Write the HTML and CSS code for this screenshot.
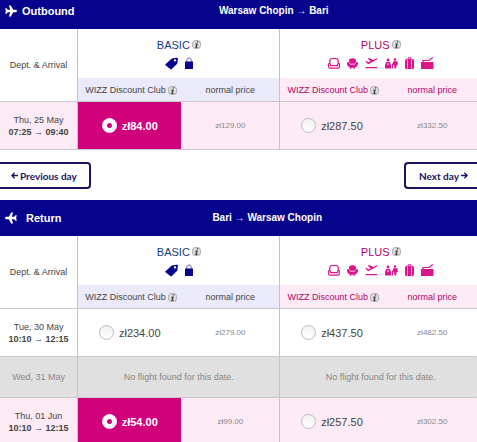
FILE: index.html
```
<!DOCTYPE html>
<html lang="en">
<head>
<meta charset="utf-8">
<title>Select flights</title>
<link rel="stylesheet" href="styles.css">
</head>

<body>

<svg class="defs" aria-hidden="true">
  <symbol id="plane" viewBox="0 0 12 12">
    <path d="M12 6c0 .7-.6 1.200-1.500 1.200H8.200L5.800 11.500H3.900L5.200 7.200H2.800L1.600 8.800H.2L.9 6 .2 3.200h1.400L2.800 4.800h2.400L3.900.5h1.900L8.200 4.800h2.300c.9 0 1.500.5 1.500 1.200z"/>
  </symbol>
  <symbol id="info" viewBox="0 0 9 9">
    <rect x=".5" y=".5" width="8" height="8" rx="3" fill="#ddd" stroke="#aaa"/>
    <path d="M5 1.200h1.400L6 2.600H4.700zM3.300 3.500h2.500L5 7h.7l-.2.900H3.200L4 4.400h-.9z" fill="#444"/>
  </symbol>
  <symbol id="tag" viewBox="0 0 13 13">
    <path fill-rule="evenodd" d="M6.500 1.800Q7 1.200 8 1.200L12 .8c.7 0 1 .4.900 1L12.500 5.500q0 .8-.6 1.400L6.800 12c-.5.500-1 .5-1.500 0L.8 8.500c-.7-.5-.7-1 0-1.600zM10 2.200a1.200 1.200 0 1 0 .1 2.400 1.200 1.200 0 0 0-.1-2.400z"/>
  </symbol>
  <symbol id="bag" viewBox="0 0 8 13">
    <path d="M1.800 5V2.500C1.800.6 6.200.6 6.200 2.500V5" fill="none" stroke="currentColor" stroke-width="1" opacity=".6"/>
    <path d="M0 4.500h8V12H0z"/>
  </symbol>
  <symbol id="seat" viewBox="0 0 12 13">
    <path d="M1.800 6V4Q1.800 1.500 4 1.500h4q2.200 0 2.200 2.500v2M1.800 6C.4 6 .4 8 .7 8.500v1.500q0 1.200 1.200 1.200h8.200q1.200 0 1.200-1.200V8.500c.3-.5.3-2.500-1.100-2.500L9.300 8.600H2.700z" fill="none" stroke="currentColor" stroke-width="1.200"/>
  </symbol>
  <symbol id="armchair" viewBox="0 0 11 13">
    <path d="M2 4.800V3.500Q2 1.200 5.500 1.200T9 3.500v1.300L7.800 6.800H3.200zM0 6.200C0 4.600 2 4.600 2.300 6l.9 1.600h4.600L8.700 6C9 4.600 11 4.600 11 6.200 11 7.700 10 10 8.500 10H8l.4 1.800H6.900L6.500 10.700h-2l-.4 1.100H2.600L3 10h-.5C1 10 0 7.700 0 6.200z"/>
  </symbol>
  <symbol id="takeoff" viewBox="0 0 13 13">
    <path d="M.3 4.600 1.500 4l2 1.200 2-1L2.800 1.600l1.400-.5 4.300 1.800L11.300 1.500c1.200-.4 1.700.4.8 1L3.200 7.300zM.5 10h11.800v1.200H.5z"/>
  </symbol>
  <symbol id="lounge" viewBox="0 0 13 13">
    <path d="M3 1.500a1.400 1.400 0 1 1 0 2.900 1.400 1.400 0 0 1 0-2.900zM1.200 5h3.600l1.200 3v3.500H0V8zM7 6.500h1V11.500H6.500zM10 1.200a1.300 1.300 0 1 1 0 2.600 1.300 1.300 0 0 1 0-2.600zM8.200 4.200h4.300l.4 3.300-1.400 1-.5 3h-1.400l-.6-3-1.200-1z"/>
    <path d="M2.500 6.200h1v1.800h-1z" fill="#fff"/>
  </symbol>
  <symbol id="suitcase" viewBox="0 0 9 13">
    <path d="M3 2V.8h3V2" fill="none" stroke="currentColor"/>
    <rect y="2" width="9" height="10" rx="1.500"/>
    <path d="M2.500 2.500v9M6.500 2.500v9" stroke="#fff" stroke-width=".7"/>
  </symbol>
  <symbol id="trolley" viewBox="0 0 13 13">
    <path d="M0 5h12.500v6.500q0 .5-.5.500H.7q-.7 0-.7-.5z"/>
    <path d="M2 5V3.500h6L11.800.6" fill="none" stroke="currentColor" stroke-width="1.200"/>
  </symbol>
</svg>

<section>
  <div class="bar bar-first">
    <svg class="plane"><use href="#plane"/></svg>
    <h2>Outbound</h2>
    <p class="route">Warsaw Chopin &rarr; Bari</p>
  </div>

  <table class="flights">
    <colgroup>
      <col class="c-date"><col class="c-club"><col class="c-normal"><col class="c-club"><col>
    </colgroup>
    <thead>
      <tr class="fares">
        <th class="date" rowspan="2">Dept. &amp; Arrival</th>
        <th class="basic end" colspan="2">
          <div class="fare">BASIC <button class="info" aria-label="About Basic"><svg><use href="#info"/></svg></button></div>
          <div class="perks">
            <svg class="w13"><use href="#tag"/></svg>
            <svg class="w8"><use href="#bag"/></svg>
          </div>
        </th>
        <th class="plus" colspan="2">
          <div class="fare">PLUS <button class="info" aria-label="About Plus"><svg><use href="#info"/></svg></button></div>
          <div class="perks">
            <svg class="w12"><use href="#seat"/></svg>
            <svg class="w11"><use href="#armchair"/></svg>
            <svg class="w13"><use href="#takeoff"/></svg>
            <svg class="w13"><use href="#lounge"/></svg>
            <svg class="w9"><use href="#suitcase"/></svg>
            <svg class="w13"><use href="#trolley"/></svg>
          </div>
        </th>
      </tr>
      <tr class="kinds">
        <th class="club">WIZZ Discount Club <button class="info" aria-label="About the club"><svg><use href="#info"/></svg></button></th>
        <th class="end">normal price</th>
        <th class="club pink">WIZZ Discount Club <button class="info" aria-label="About the club"><svg><use href="#info"/></svg></button></th>
        <th class="pink plus">normal price</th>
      </tr>
    </thead>
    <tbody>
      <tr class="picked">
        <td class="date">Thu, 25 May<br><b>07:25 &rarr; 09:40</b></td>
        <td class="selected"><label><input type="radio" name="out" checked>zł84.00</label></td>
        <td class="normal end">zł129.00</td>
        <td><label><input type="radio" name="out">zł287.50</label></td>
        <td class="normal plus">zł332.50</td>
      </tr>
    </tbody>
  </table>

  <div class="days">
    <button class="day prev"><svg viewBox="0 0 7 7"><path d="M7 3.500H1M3.600.8.900 3.500l2.700 2.700"/></svg>Previous day</button>
    <button class="day next">Next day<svg viewBox="0 0 7 7"><path d="M0 3.500h6M3.400.8l2.700 2.700-2.700 2.700"/></svg></button>
  </div>
</section>

<section>
  <div class="bar bar-return">
    <svg class="plane"><use href="#plane"/></svg>
    <h2>Return</h2>
    <p class="route">Bari &rarr; Warsaw Chopin</p>
  </div>

  <table class="flights">
    <colgroup>
      <col class="c-date"><col class="c-club"><col class="c-normal"><col class="c-club"><col>
    </colgroup>
    <thead>
      <tr class="fares">
        <th class="date" rowspan="2">Dept. &amp; Arrival</th>
        <th class="basic end" colspan="2">
          <div class="fare">BASIC <button class="info" aria-label="About Basic"><svg><use href="#info"/></svg></button></div>
          <div class="perks">
            <svg class="w13"><use href="#tag"/></svg>
            <svg class="w8"><use href="#bag"/></svg>
          </div>
        </th>
        <th class="plus" colspan="2">
          <div class="fare">PLUS <button class="info" aria-label="About Plus"><svg><use href="#info"/></svg></button></div>
          <div class="perks">
            <svg class="w12"><use href="#seat"/></svg>
            <svg class="w11"><use href="#armchair"/></svg>
            <svg class="w13"><use href="#takeoff"/></svg>
            <svg class="w13"><use href="#lounge"/></svg>
            <svg class="w9"><use href="#suitcase"/></svg>
            <svg class="w13"><use href="#trolley"/></svg>
          </div>
        </th>
      </tr>
      <tr class="kinds">
        <th class="club">WIZZ Discount Club <button class="info" aria-label="About the club"><svg><use href="#info"/></svg></button></th>
        <th class="end">normal price</th>
        <th class="club pink">WIZZ Discount Club <button class="info" aria-label="About the club"><svg><use href="#info"/></svg></button></th>
        <th class="pink plus">normal price</th>
      </tr>
    </thead>
    <tbody>
      <tr>
        <td class="date">Tue, 30 May<br><b>10:10 &rarr; 12:15</b></td>
        <td><label><input type="radio" name="ret">zł234.00</label></td>
        <td class="normal end">zł279.00</td>
        <td><label><input type="radio" name="ret">zł437.50</label></td>
        <td class="normal plus">zł482.50</td>
      </tr>
      <tr class="none">
        <td class="date">Wed, 31 May</td>
        <td class="end" colspan="2">No flight found for this date.</td>
        <td class="plus" colspan="2">No flight found for this date.</td>
      </tr>
      <tr class="picked">
        <td class="date">Thu, 01 Jun<br><b>10:10 &rarr; 12:15</b></td>
        <td class="selected"><label><input type="radio" name="ret" checked>zł54.00</label></td>
        <td class="normal end">zł99.00</td>
        <td><label><input type="radio" name="ret">zł257.50</label></td>
        <td class="normal plus">zł302.50</td>
      </tr>
    </tbody>
  </table>
</section>

</body>
</html>
```
FILE: styles.css
```
* {
  box-sizing: border-box;
}

body {
  margin: 0;
  background: #fff;
  color: #444;
  font-family: "Liberation Sans", Arial, sans-serif;
  font-size: 9px;
  line-height: 12px;
}

body::-webkit-scrollbar {
  display: none;
}

svg {
  display: block;
  fill: currentColor;
}

.defs {
  display: none;
}

/* title bars */
.bar {
  display: flex;
  align-items: center;
  padding: 11px 4px 11px 5px;
  background: #06038d;
  color: #fff;
}

.bar-first {
  padding-top: 4px;
}

.plane {
  width: 12px;
  height: 12px;
  margin-right: 5px;
}

.bar-return .plane {
  margin-right: 9px;
  transform: scaleX(-1);
}

.bar h2 {
  margin: 0;
  font-size: 11px;
  line-height: 14px;
}

.route {
  flex: 1;
  margin: 0;
  font-size: 10px;
  font-weight: bold;
  line-height: 14px;
  text-align: center;
}

/* flight tables */
.flights {
  width: 100%;
  table-layout: fixed;
  border-collapse: separate;
  border-spacing: 0;
}

.c-date {
  width: 16.4%;
}

.c-club {
  width: 21.6%;
}

.c-normal {
  width: 20.8%;
}

th, td {
  padding: 0;
  border-bottom: 1px solid #cbc6cd;
  font-weight: normal;
  text-align: center;
  vertical-align: middle;
}

td {
  height: 48px;
}

.date, .end {
  border-right: 1px solid #c4c2c8;
}

.plus {
  padding-left: 4px;
}

.fares th {
  height: 49px;
}

.fares .basic, .fares .plus {
  border-bottom: 0;
}

.basic {
  color: #06038d;
}

.fares .plus {
  color: #dc148c;
}

.fare {
  display: flex;
  justify-content: center;
  align-items: center;
  gap: 2px;
  color: #143c80;
  font-size: 11px;
  line-height: 14px;
}

.plus .fare {
  color: #b5006c;
}

.perks {
  display: flex;
  justify-content: center;
  gap: 7px;
  margin-top: 5px;
}

.perks svg {
  height: 13px;
}

.w8 { width: 8px; }
.w9 { width: 9px; }
.w11 { width: 11px; }
.w12 { width: 12px; }
.w13 { width: 13px; }

.info {
  display: inline-block;
  padding: 0;
  border: 0;
  background: none;
  vertical-align: middle;
}

.info svg {
  width: 9px;
  height: 9px;
}

.kinds th {
  height: 24px;
  background: #ebeafa;
  white-space: nowrap;
}

.kinds .club {
  padding-left: 7px;
  text-align: left;
}

.kinds .pink {
  background: #fcebf5;
  color: #b5006c;
}

.picked td {
  background: #fcebf5;
}

.picked .selected {
  background: #d1007d;
  color: #fff;
  font-weight: bold;
}

.normal {
  color: #888;
  font-size: 8px;
}

.none td {
  height: 41px;
  background: repeating-conic-gradient(#dcdcdc 0 25%, #e4e4e4 0 50%) 0 0 / 2px 2px;
  color: #888;
}

label {
  display: flex;
  justify-content: center;
  align-items: center;
  gap: 5px;
  font-size: 11px;
}

input[type=radio] {
  appearance: none;
  width: 15px;
  height: 15px;
  margin: 0;
  border: 1px solid #bbb;
  border-radius: 50%;
  background: linear-gradient(#f2f2f2, #fff);
}

input[type=radio]:checked {
  border-color: #fff;
  background: radial-gradient(circle, #d1007d 2px, #fff 3px);
}

/* day switcher */
.days {
  display: flex;
  justify-content: space-between;
  padding: 12px 0 11px;
}

.day {
  display: flex;
  align-items: center;
  gap: 2px;
  height: 27px;
  border: 2px solid #1b1464;
  background: #fff;
  color: #1b1464;
  font: bold 10px/12px Lato, sans-serif;
}

.day svg {
  width: 7px;
  height: 7px;
  fill: none;
  stroke: currentColor;
  stroke-width: 1.3;
}

.prev {
  padding: 0 12px 0 11px;
  border-left: 0;
  border-radius: 0 4px 4px 0;
}

.next {
  padding: 0 9px 0 13px;
  border-right: 0;
  border-radius: 4px 0 0 4px;
}
```
